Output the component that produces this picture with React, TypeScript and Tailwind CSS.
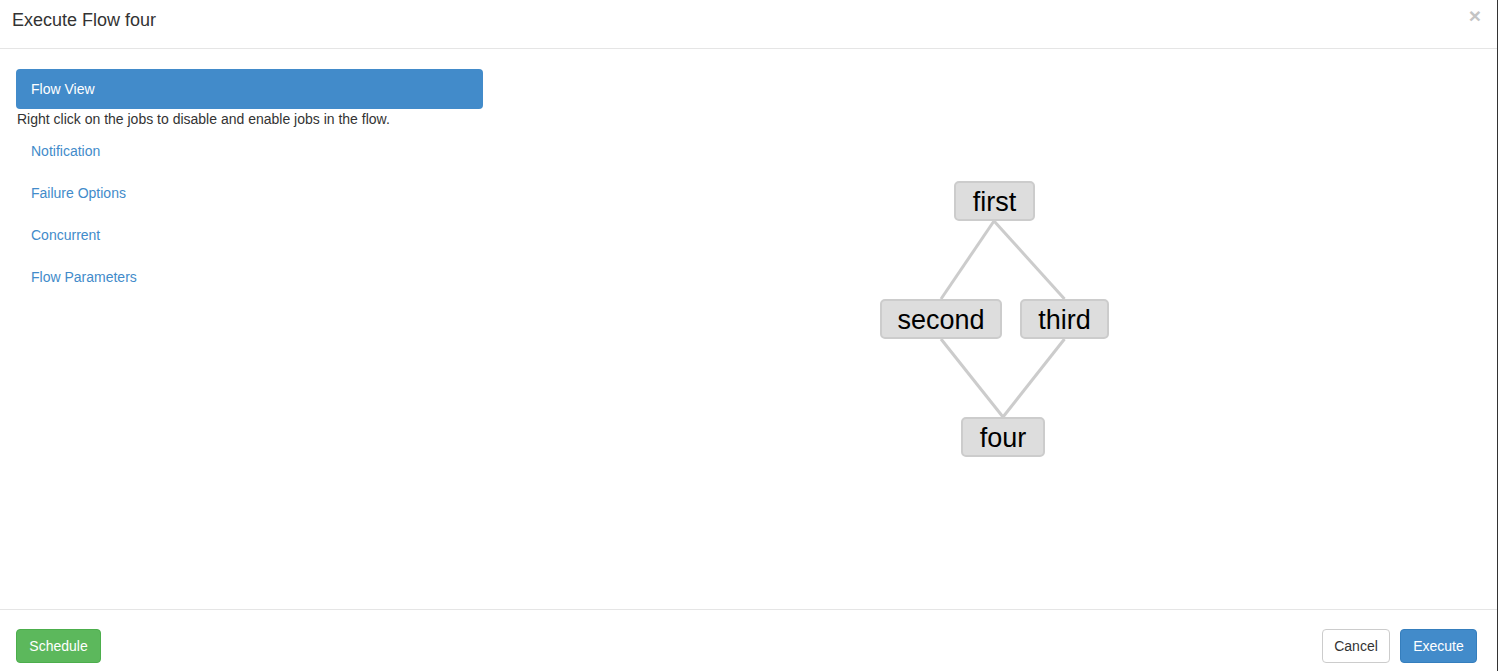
import React from "react";

const font = { fontFamily: '"Liberation Sans", Arial, Helvetica, sans-serif' };

type Node = { label: string; left: number; top: number; w: number };

const nodes: Node[] = [
  { label: "first", left: 471, top: 112, w: 81 },
  { label: "second", left: 397, top: 230, w: 122 },
  { label: "third", left: 537, top: 230, w: 89 },
  { label: "four", left: 478, top: 348, w: 84 },
];

const edges: [number, number, number, number][] = [
  [511, 152, 458, 230],
  [511, 152, 581.5, 230],
  [458, 270, 520, 348],
  [581.5, 270, 520, 348],
];

export default function App() {
  return (
    <div className="flex h-[671px] w-full overflow-hidden bg-white" style={font}>
      <div className="relative flex w-[1497px] flex-col bg-white text-[#333]">
        {/* Header */}
        <div className="relative h-[49px] border-b border-[#e5e5e5] pl-[12px] pt-[10px]">
          <h4 className="text-[18px] leading-[20px]">Execute Flow four</h4>
          <span className="absolute right-[16px] top-[3px] text-[21px] font-bold leading-[26px] text-[#c4c4c4]">
            ×
          </span>
        </div>

        {/* Body */}
        <div className="flex h-[560px] pl-[16px] pt-[20px]">
          <div className="flex w-[467px] flex-col text-[14px]">
            <div className="h-[40px] rounded-[4px] bg-[#428bca] px-[15px] leading-[40px] text-white">
              Flow View
            </div>
            <p className="pl-[1px] leading-[20px]">
              Right click on the jobs to disable and enable jobs in the flow.
            </p>
            <div className="mt-[2px] flex flex-col gap-[2px]">
              {["Notification", "Failure Options", "Concurrent", "Flow Parameters"].map((t) => (
                <div key={t} className="h-[40px] px-[15px] leading-[40px] text-[#428bca]">
                  {t}
                </div>
              ))}
            </div>
          </div>
          <div className="relative flex-1">
            <svg className="absolute left-0 top-0" width="1000" height="500">
              {edges.map(([x1, y1, x2, y2], i) => (
                <line key={i} x1={x1} y1={y1} x2={x2} y2={y2} stroke="#cccccc" strokeWidth={3} />
              ))}
            </svg>
            {nodes.map((n) => (
              <div
                key={n.label}
                className="absolute flex h-[40px] items-center justify-center rounded-[5px] border-2 border-[#cccccc] bg-[#dddddd] pt-[2px] text-[27px] text-black"
                style={{ left: n.left, top: n.top, width: n.w }}
              >
                {n.label}
              </div>
            ))}
          </div>
        </div>

        {/* Footer */}
        <div className="flex flex-1 items-start justify-between border-t border-[#e5e5e5] pl-[16px] pr-[20px] pt-[19px] text-[14px]">
          <button className="h-[34px] w-[85px] rounded-[4px] border border-[#4cae4c] bg-[#5cb85c] leading-[20px] text-white">
            Schedule
          </button>
          <div className="flex gap-[10px]">
            <button className="h-[34px] w-[68px] rounded-[4px] border border-[#cccccc] bg-white leading-[20px] text-[#333]">
              Cancel
            </button>
            <button className="h-[34px] w-[77px] rounded-[4px] border border-[#357ebd] bg-[#428bca] leading-[20px] text-white">
              Execute
            </button>
          </div>
        </div>
      </div>
      <div className="w-[1px] bg-[#333]" />
    </div>
  );
}
